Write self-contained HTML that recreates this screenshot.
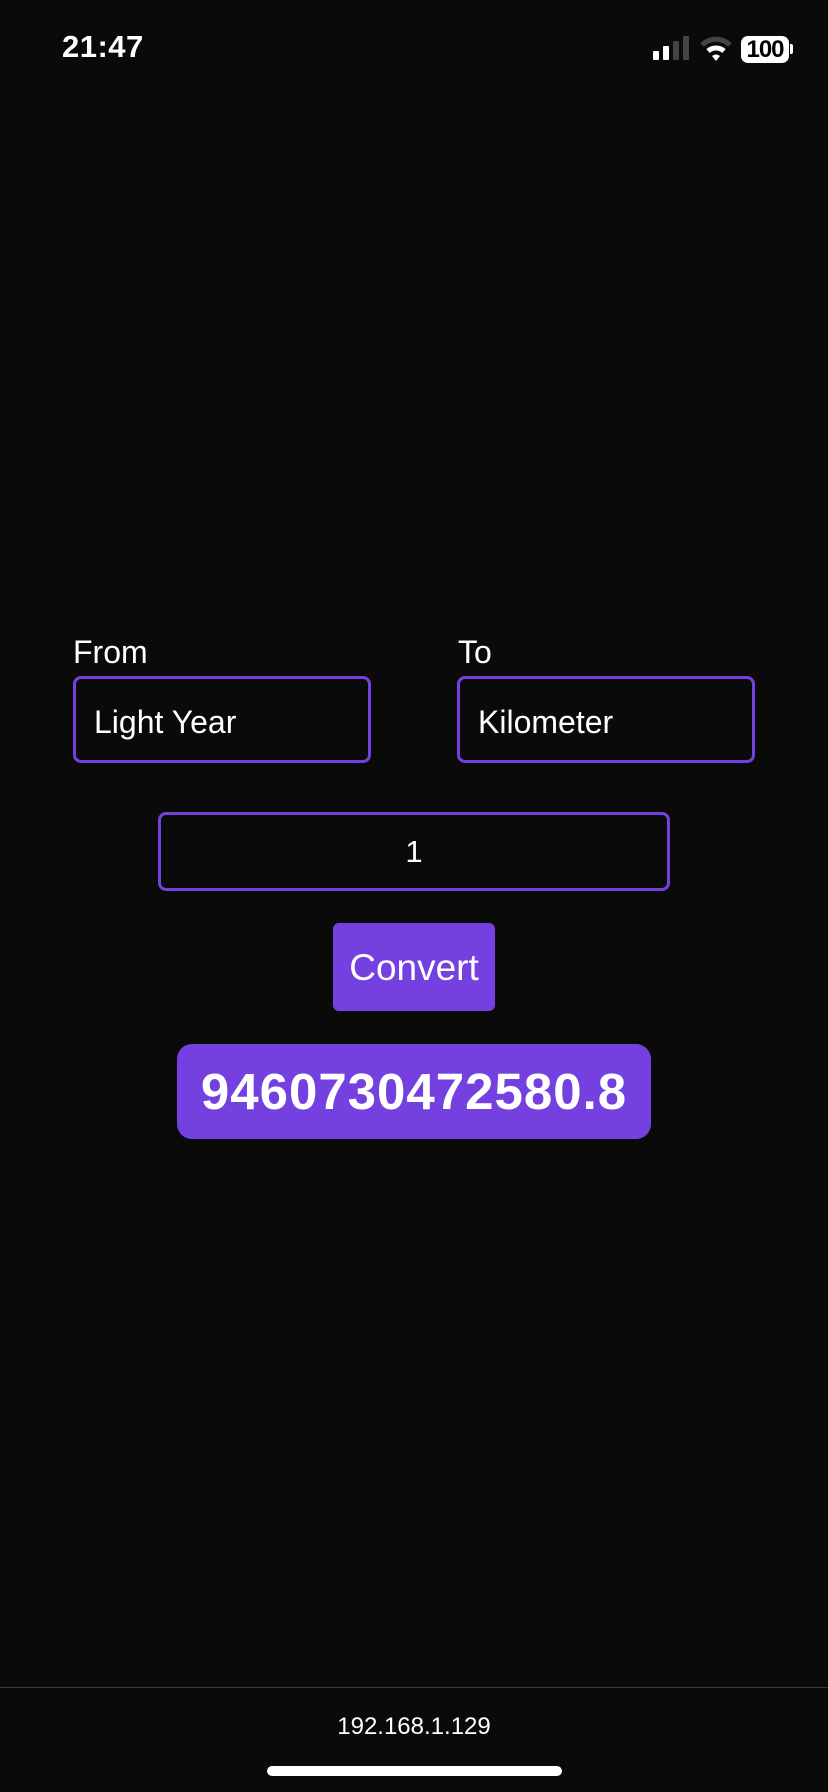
<!DOCTYPE html>
<html><head><meta charset="utf-8"><style>
body{margin:0;width:828px;height:1792px;background:#0a0a0a;position:relative;overflow:hidden;font-family:"Liberation Sans",sans-serif;color:#fff}
.a{position:absolute}
.box{position:absolute;border:3px solid #7440e0;border-radius:8px;box-sizing:border-box}
</style></head><body>
<div class="a" style="left:62px;top:29px;font-size:31px;font-weight:bold;letter-spacing:0.5px">21:47</div>
<div class="a" style="left:653px;top:51px;width:6px;height:9px;background:#fff;border-radius:1px"></div>
<div class="a" style="left:663px;top:46px;width:6px;height:14px;background:#fff;border-radius:1px"></div>
<div class="a" style="left:673px;top:41px;width:6px;height:19px;background:#444;border-radius:1px"></div>
<div class="a" style="left:683px;top:36px;width:6px;height:24px;background:#444;border-radius:1px"></div>
<svg class="a" style="left:700px;top:36px" width="32" height="26" viewBox="0 0 32 26">
<path d="M2 9 A20 20 0 0 1 30 9" stroke="#444" stroke-width="5" fill="none"/>
<path d="M8 15 A12 12 0 0 1 24 15" stroke="#fff" stroke-width="5" fill="none"/>
<path d="M12 20 L16 25 L20 20 A6 6 0 0 0 12 20Z" fill="#fff"/></svg>
<div class="a" style="left:741px;top:36px;width:48px;height:27px;background:#fff;border-radius:7px;color:#000;font-weight:bold;font-size:24px;line-height:27px;text-align:center;letter-spacing:-1px">100</div>
<div class="a" style="left:790px;top:44px;width:3px;height:10px;background:#fff;border-radius:0 2px 2px 0"></div>

<div class="a" style="left:73px;top:634px;font-size:32px">From</div>
<div class="a" style="left:458px;top:634px;font-size:32px">To</div>
<div class="box" style="left:73px;top:676px;width:298px;height:87px"></div>
<div class="a" style="left:94px;top:704px;font-size:32px">Light Year</div>
<div class="box" style="left:457px;top:676px;width:298px;height:87px"></div>
<div class="a" style="left:478px;top:704px;font-size:32px">Kilometer</div>
<div class="box" style="left:158px;top:812px;width:512px;height:79px"></div>
<div class="a" style="left:158px;top:834px;width:512px;text-align:center;font-size:31px">1</div>
<div class="a" style="left:333px;top:923px;width:162px;height:88px;background:#7440e0;border-radius:6px;text-align:center;line-height:90px;font-size:37px">Convert</div>
<div class="a" style="left:177px;top:1044px;width:474px;height:95px;background:#7440e0;border-radius:15px;text-align:center;line-height:95px;font-size:51px;font-weight:bold;letter-spacing:1px">9460730472580.8</div>

<div class="a" style="left:0;top:1687px;width:828px;height:1px;background:#3a3a3a"></div>
<div class="a" style="left:0;top:1713px;width:828px;text-align:center;font-size:24px">192.168.1.129</div>
<div class="a" style="left:267px;top:1766px;width:295px;height:10px;background:#fff;border-radius:5px"></div>
</body></html>
